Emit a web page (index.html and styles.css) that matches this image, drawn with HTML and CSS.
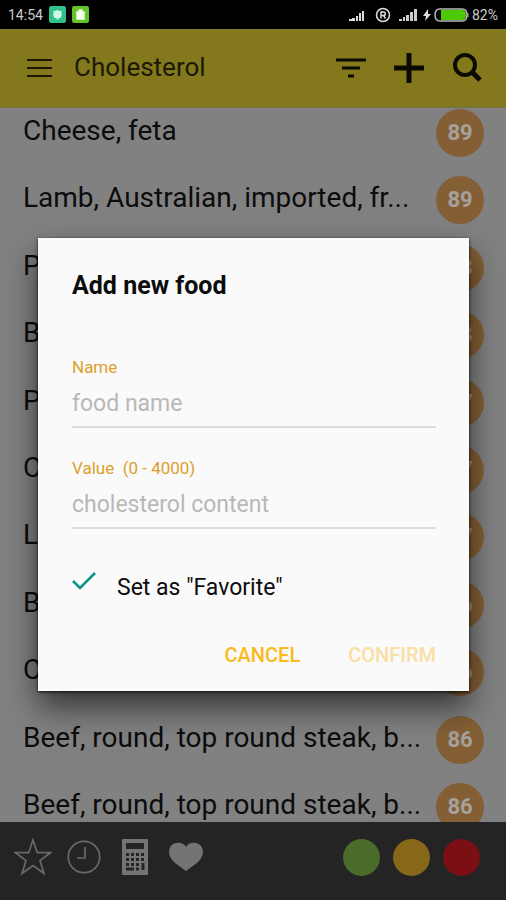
FILE: index.html
```html
<!DOCTYPE html>
<html lang="en">
<head>
<meta charset="utf-8">
<meta name="viewport" content="width=device-width, initial-scale=1">
<title>Cholesterol</title>
<link rel="stylesheet" href="styles.css">
</head>
<body>
<div class="status">
  <span>14:54</span>
  <svg class="app-icon" viewBox="0 0 16 16"><rect width="16" height="16" rx="2" fill="#2fc08c"/><circle cx="8" cy="8" r="4" fill="#d5f7ea"/><path d="M4 5l2 1M12 5l-2 1M8 13v-2" stroke="#d5f7ea"/></svg>
  <svg class="app-icon" viewBox="0 0 16 16"><rect width="16" height="16" rx="2" fill="#63c12b"/><path d="M4 5h2V3h4v2h2v8H4z" fill="#f1ffe9"/></svg>
  <span class="spacer"></span>
  <svg class="signal" viewBox="0 0 18 14"><path d="M2 13v-2h3v2zM5 13v-3h3v3zM9 13V8h2v5zM12 13V5h2v8zM15 13V3h2v10z" fill="#ddd"/></svg>
  <svg class="reg" viewBox="0 0 16 16"><circle cx="8" cy="8" r="6.500" fill="none" stroke="#ddd" stroke-width="1.500"/><path d="M6 11.500V5h2.500a1.800 1.800 0 0 1 0 3.600H6M8.500 8.600l2 2.900" fill="none" stroke="#ddd" stroke-width="1.500"/></svg>
  <svg class="signal" viewBox="0 0 18 14"><path d="M0 13v-2h3v2zM4 13V9h2v4zM7 13V7h3v6zM11 13V4h3v9zM15 13V1h3v12z" fill="#ccc"/></svg>
  <svg class="battery" viewBox="0 0 46 14"><path d="M5 1L0 8h3l-1 5 6-7H5z" fill="#ddd"/><path d="M17 1h22q5 0 5 6t-5 6H17q-5 0-5-6t5-6z" fill="none" stroke="#bbb" stroke-width="1.500"/><path d="M18 2h21q4 0 4 5t-4 5H18z" fill="#4cca05"/><path d="M45 5v4" stroke="#bbb"/></svg>
  <span>82%</span>
</div>
<header class="bar">
  <button class="icon" aria-label="Menu"><svg width="26" height="20" viewBox="0 0 26 20"><path d="M0 2h25M0 10h25M0 18h25" stroke="#1b1805" stroke-width="2"/></svg></button>
  <h1>Cholesterol</h1>
  <button class="icon" aria-label="Filter"><svg width="30" height="20" viewBox="0 0 30 20"><path d="M0 2h30M6 10h18M12 18h6" stroke="#0b0a02" stroke-width="3"/></svg></button>
  <button class="icon" aria-label="Add"><svg width="30" height="30" viewBox="0 0 30 30"><path d="M0 15h30M15 0v30" stroke="#0b0a02" stroke-width="5"/></svg></button>
  <button class="icon" aria-label="Search"><svg width="30" height="30" viewBox="0 0 30 30"><circle cx="13" cy="12" r="10" fill="none" stroke="#0b0a02" stroke-width="4"/><path d="M19 18l9 9" stroke="#0b0a02" stroke-width="5"/></svg></button>
</header>
<main class="list-area">
  <ul class="list">
    <li><span class="food">Cheese, feta</span><span class="badge">89</span></li>
    <li><span class="food">Lamb, Australian, imported, fr...</span><span class="badge">89</span></li>
    <li><span class="food">P</span><span class="badge">88</span></li>
    <li><span class="food">B</span><span class="badge">88</span></li>
    <li><span class="food">P</span><span class="badge">87</span></li>
    <li><span class="food">C</span><span class="badge">87</span></li>
    <li><span class="food">L</span><span class="badge">87</span></li>
    <li><span class="food">B</span><span class="badge">86</span></li>
    <li><span class="food">C</span><span class="badge">86</span></li>
    <li><span class="food">Beef, round, top round steak, b...</span><span class="badge">86</span></li>
    <li><span class="food">Beef, round, top round steak, b...</span><span class="badge">86</span></li>
  </ul>
</main>
<footer class="tabs">
  <button class="icon slot" aria-label="Favorites"><svg width="38" height="38" viewBox="0 0 38 38"><path d="M19 2l4.300 12.700h13.200L26 22.500l4 13L19 27.500 8 35.500l4-13L1.500 14.700h13.200z" fill="none" stroke="#696969" stroke-width="1.700"/></svg></button>
  <button class="icon slot" aria-label="History"><svg width="34" height="34" viewBox="0 0 34 34"><circle cx="17" cy="17" r="15.700" fill="none" stroke="#696969" stroke-width="1.700"/><path d="M18 7v11h-8" fill="none" stroke="#696969" stroke-width="1.700"/></svg></button>
  <button class="icon slot" aria-label="Calculator"><svg width="28" height="36" viewBox="0 0 28 36"><rect x="1" width="26" height="36" rx="1" fill="#747474"/><path d="M5 4h18v6H5z" fill="#242424"/><path d="M5 15.500h19M5 20.500h19M5 25.500h14" stroke="#242424" stroke-width="3" stroke-dasharray="3 2"/><path d="M5 30h8M15 30h3M22 24v7" stroke="#242424" stroke-width="3"/></svg></button>
  <button class="icon slot" aria-label="Liked"><svg width="36" height="30" viewBox="0 0 36 30"><path d="M18 29C13 25 1 19 1 10 1 0 14-2 18 5c4-7 17-5 17 5 0 9-12 15-17 19z" fill="#747474"/></svg></button>
  <span class="spacer"></span>
  <span class="dots">
    <button class="dot green" aria-label="Low"></button>
    <button class="dot amber" aria-label="Medium"></button>
    <button class="dot red" aria-label="High"></button>
  </span>
</footer>
<form class="dialog" role="dialog" aria-labelledby="dialog-title">
  <h2 id="dialog-title">Add new food</h2>
  <div class="field">
    <label for="name">Name</label>
    <input id="name" type="text" placeholder="food name">
  </div>
  <div class="field">
    <label for="value">Value&nbsp; (0 - 4000)</label>
    <input id="value" type="text" placeholder="cholesterol content">
  </div>
  <div class="check">
    <span class="tick"><input id="fav" type="checkbox" checked><svg viewBox="0 0 24 18"><path d="M1 9l7 7L23 1" fill="none" stroke="#0b9382" stroke-width="2.500"/></svg></span>
    <label for="fav">Set as "Favorite"</label>
  </div>
  <div class="actions">
    <button type="button">CANCEL</button>
    <button type="submit" disabled>CONFIRM</button>
  </div>
</form>
</body>
</html>
```
FILE: styles.css
```css
* { box-sizing: border-box; }
body {
  margin: 0;
  height: 100vh;
  display: flex;
  flex-direction: column;
  overflow: hidden;
  position: relative;
  background: #818181;
  font-family: Roboto, sans-serif;
  color: #0c0c0c;
}
button { border: 0; padding: 0; background: none; font: inherit; }
.icon { display: flex; align-items: center; justify-content: center; }
.spacer { flex: 1; }
.status {
  height: 29px;
  display: flex;
  align-items: center;
  gap: 6px;
  padding: 0 8px;
  background: #000;
  color: #ccc;
  font-size: 14px;
}
.app-icon { width: 17px; height: 17px; }
.signal { width: 18px; height: 14px; }
.reg { width: 16px; height: 16px; margin: 0 2px 0 4px; }
.battery { width: 46px; height: 14px; margin-right: -3px; }
.bar {
  height: 79px;
  display: flex;
  align-items: center;
  gap: 28px;
  padding: 0 24px 0 27px;
  background: #84781d;
  border-bottom: 1px solid #77704a;
}
.bar h1 {
  flex: 1;
  margin: 0 0 0 -7px;
  font-size: 26px;
  font-weight: 400;
  line-height: 32px;
  padding-bottom: 2px;
  color: #1b1805;
}
.list-area { flex: 1; min-height: 0; display: flex; overflow: hidden; }
.list {
  flex: 1;
  min-width: 0;
  display: flex;
  flex-direction: column;
  margin: -9px 0 -19px;
  padding: 0 22px 0 23px;
  list-style: none;
}
.list li { flex: 1; display: flex; align-items: center; gap: 16px; }
.food {
  flex: 1;
  min-width: 0;
  padding-bottom: 4px;
  white-space: nowrap;
  font-size: 28px;
  line-height: 32px;
}
.badge {
  width: 48px;
  height: 48px;
  border-radius: 50%;
  background: #845f35;
  color: #a5a19c;
  font-size: 22px;
  font-weight: 700;
  line-height: 48px;
  text-align: center;
}
.tabs {
  height: 78px;
  display: flex;
  align-items: center;
  padding: 0 26px 8px 7px;
  background: #242424;
}
.slot { width: 51px; height: 38px; }
.dots { display: flex; gap: 13px; }
.dot { width: 37px; height: 37px; border-radius: 50%; }
.green { background: #4a6b2a; }
.amber { background: #876819; }
.red { background: #7b0f13; }
.dialog {
  position: absolute;
  top: 238px;
  left: 38px;
  right: 37px;
  padding: 32px 33px 16px 34px;
  background: #fafafa;
  box-shadow: 0 16px 30px rgba(0, 0, 0, .6), 0 1px 3px rgba(0, 0, 0, .8);
}
.dialog h2 {
  margin: 0 0 55px;
  font-size: 25px;
  font-weight: 700;
  line-height: 32px;
}
.field { margin-bottom: 30px; }
.field label {
  display: block;
  color: #dda02b;
  font-size: 17px;
  line-height: 20px;
}
.field input {
  display: block;
  width: 100%;
  height: 51px;
  padding: 4px 0 0;
  border: 0;
  border-bottom: 2px solid #dcdcdc;
  background: none;
  font: inherit;
  font-size: 23px;
}
.field input::placeholder { color: #b8b8b8; }
.check {
  display: flex;
  align-items: center;
  gap: 21px;
  margin-top: 43px;
  font-size: 23px;
  line-height: 32px;
}
.tick { position: relative; width: 24px; height: 32px; }
.tick input { position: absolute; inset: 0; margin: 0; opacity: 0; }
.tick svg { display: block; width: 24px; height: 18px; }
.actions { display: flex; justify-content: flex-end; gap: 48px; margin-top: 31px; }
.actions button { color: #fbb91c; font-size: 20px; font-weight: 500; line-height: 40px; }
.actions button:disabled { color: #fbdfa2; }
```
